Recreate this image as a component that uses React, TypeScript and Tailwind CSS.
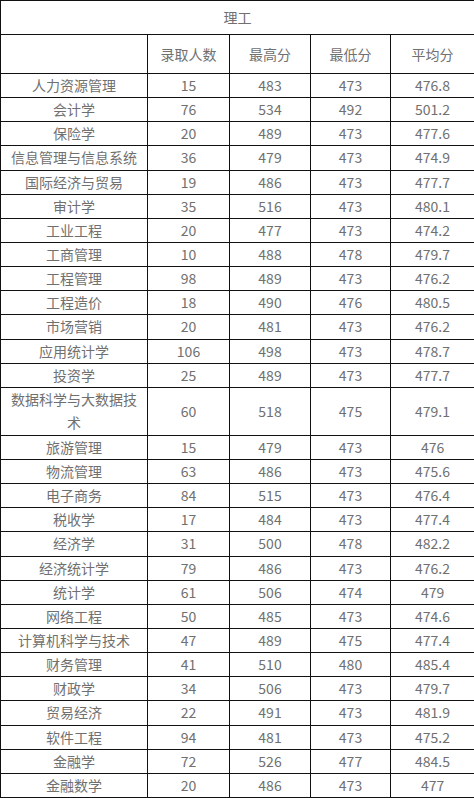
const rows: [string, string, string, string, string][] = [
  ["人力资源管理", "15", "483", "473", "476.8"],
  ["会计学", "76", "534", "492", "501.2"],
  ["保险学", "20", "489", "473", "477.6"],
  ["信息管理与信息系统", "36", "479", "473", "474.9"],
  ["国际经济与贸易", "19", "486", "473", "477.7"],
  ["审计学", "35", "516", "473", "480.1"],
  ["工业工程", "20", "477", "473", "474.2"],
  ["工商管理", "10", "488", "478", "479.7"],
  ["工程管理", "98", "489", "473", "476.2"],
  ["工程造价", "18", "490", "476", "480.5"],
  ["市场营销", "20", "481", "473", "476.2"],
  ["应用统计学", "106", "498", "473", "478.7"],
  ["投资学", "25", "489", "473", "477.7"],
  ["数据科学与大数据技术", "60", "518", "475", "479.1"],
  ["旅游管理", "15", "479", "473", "476"],
  ["物流管理", "63", "486", "473", "475.6"],
  ["电子商务", "84", "515", "473", "476.4"],
  ["税收学", "17", "484", "473", "477.4"],
  ["经济学", "31", "500", "478", "482.2"],
  ["经济统计学", "79", "486", "473", "476.2"],
  ["统计学", "61", "506", "474", "479"],
  ["网络工程", "50", "485", "473", "474.6"],
  ["计算机科学与技术", "47", "489", "475", "477.4"],
  ["财务管理", "41", "510", "480", "485.4"],
  ["财政学", "34", "506", "473", "479.7"],
  ["贸易经济", "22", "491", "473", "481.9"],
  ["软件工程", "94", "481", "473", "475.2"],
  ["金融学", "72", "526", "477", "484.5"],
  ["金融数学", "20", "486", "473", "477"],
];

const cell = "border border-[#111] px-[6px] text-center align-middle";

export default function App() {
  return (
    <div className="w-[474px] bg-white text-[14px] text-[#707070] leading-[23px] font-['Noto_Sans_CJK_SC','Noto_Sans',sans-serif]">
      <table className="w-[474px] table-fixed border-collapse">
        <colgroup>
          <col className="w-[147px]" />
          <col className="w-[82px]" />
          <col className="w-[81px]" />
          <col className="w-[80px]" />
          <col className="w-[84px]" />
        </colgroup>
        <tbody>
          <tr className="h-[34px]">
            <td colSpan={5} className={cell}>理工</td>
          </tr>
          <tr className="h-[39px]">
            <td className={cell}></td>
            <td className={cell}>录取人数</td>
            <td className={cell}>最高分</td>
            <td className={cell}>最低分</td>
            <td className={cell}>平均分</td>
          </tr>
          {rows.map((r) => (
            <tr key={r[0]} className={r[0].length > 9 ? "h-[48px]" : "h-[24.15px]"}>
              {r.map((v, i) => (
                <td key={i} className={cell}>{v}</td>
              ))}
            </tr>
          ))}
        </tbody>
      </table>
    </div>
  );
}
